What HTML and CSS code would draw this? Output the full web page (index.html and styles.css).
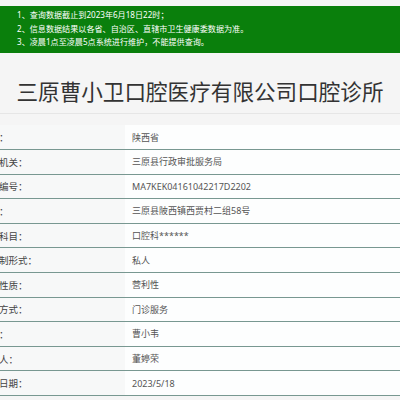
FILE: index.html
```html
<!DOCTYPE html>
<html lang="zh-CN">
<head>
<meta charset="utf-8">
<title>三原曹小卫口腔医疗有限公司口腔诊所</title>
<link rel="stylesheet" href="styles.css">
</head>
<body>
<div class="notice">
  <p>1、查询数据截止到2023年6月18日22时；</p>
  <p>2、信息数据结果以各省、自治区、直辖市卫生健康委数据为准。</p>
  <p>3、凌晨1点至凌晨5点系统进行维护，不能提供查询。</p>
</div>
<div class="title-box">
  <h1 class="title">三原曹小卫口腔医疗有限公司口腔诊所</h1>
</div>
<div class="table">
  <div class="row"><div class="label">省份：</div><div class="value">陕西省</div></div>
  <div class="row"><div class="label">发证机关：</div><div class="value">三原县行政审批服务局</div></div>
  <div class="row"><div class="label">登记编号：</div><div class="value">MA7KEK04161042217D2202</div></div>
  <div class="row"><div class="label">地址：</div><div class="value">三原县陂西镇西贾村二组58号</div></div>
  <div class="row"><div class="label">诊疗科目：</div><div class="value">口腔科******</div></div>
  <div class="row"><div class="label">所有制形式：</div><div class="value">私人</div></div>
  <div class="row"><div class="label">经营性质：</div><div class="value">营利性</div></div>
  <div class="row"><div class="label">服务方式：</div><div class="value">门诊服务</div></div>
  <div class="row"><div class="label">法人：</div><div class="value">曹小韦</div></div>
  <div class="row"><div class="label">负责人：</div><div class="value">董婷荣</div></div>
  <div class="row"><div class="label">发证日期：</div><div class="value">2023/5/18</div></div>
</div>
</body>
</html>
```
FILE: styles.css
```css
html, body {
  margin: 0;
  padding: 0;
  background: #f5f5f5;
  font-family: "Noto Sans", "Noto Sans CJK SC", sans-serif;
  overflow: hidden;
}

.notice {
  margin-top: 6px;
  height: 47px;
  box-sizing: border-box;
  padding: 2px 0 0 17px;
  background: #0a7f0c;
  color: #ffffff;
  font-size: 8.1px;
  line-height: 13.5px;
}

.notice p {
  margin: 0;
  white-space: nowrap;
}

.title-box {
  height: 61px;
  box-sizing: border-box;
  padding-top: 23px;
  border-bottom: 1px solid #e6e6e6;
}

.title {
  margin: 0;
  text-align: center;
  font-family: "Noto Sans CJK SC", sans-serif;
  font-weight: 400;
  font-size: 21.6px;
  line-height: 30px;
  color: #333333;
  white-space: nowrap;
}

.table {
  margin-top: 11.4px;
}

.row {
  display: flex;
  height: 24.6px;
  box-sizing: border-box;
  border-bottom: 1px solid #789891;
  box-shadow: 0 1px 0 #cfe1dc;
}

.label {
  width: 125px;
  flex: none;
  box-sizing: border-box;
  background: #f7f8f8;
  font-size: 9.5px;
  color: #444444;
  display: flex;
  align-items: center;
  white-space: nowrap;
  overflow: hidden;
  text-indent: -20px;
}

.value {
  flex: 1;
  background: #fdfefe;
  padding-left: 7px;
  font-size: 9px;
  color: #555555;
  display: flex;
  align-items: center;
  white-space: nowrap;
}
```
